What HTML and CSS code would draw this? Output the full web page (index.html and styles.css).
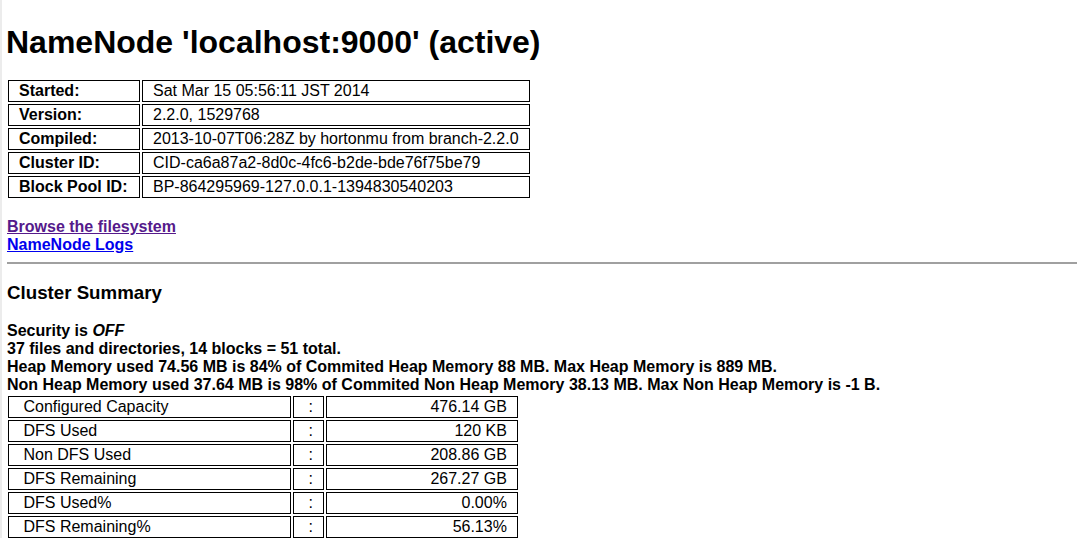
FILE: index.html
```html
<!DOCTYPE html>
<html>
<head>
<meta charset="utf-8">
<title>Hadoop NameNode localhost:9000</title>
<link rel="stylesheet" href="styles.css">
</head>
<body>
<h1 class="title">NameNode 'localhost:9000' (active)</h1>
<table class="info">
<tr><td class="col1">Started:</td><td>Sat Mar 15 05:56:11 JST 2014</td></tr>
<tr><td class="col1">Version:</td><td>2.2.0, 1529768</td></tr>
<tr><td class="col1">Compiled:</td><td>2013-10-07T06:28Z by hortonmu from branch-2.2.0</td></tr>
<tr><td class="col1">Cluster ID:</td><td>CID-ca6a87a2-8d0c-4fc6-b2de-bde76f75be79</td></tr>
<tr><td class="col1">Block Pool ID:</td><td>BP-864295969-127.0.0.1-1394830540203</td></tr>
</table>
<div class="links">
<a class="visited" href="#browse">Browse the filesystem</a><br>
<a class="fresh" href="#logs">NameNode Logs</a>
</div>
<hr class="rule">
<h3 class="section">Cluster Summary</h3>
<div class="summary">
Security is <em>OFF</em><br>
37 files and directories, 14 blocks = 51 total.<br>
Heap Memory used 74.56 MB is 84% of Commited Heap Memory 88 MB. Max Heap Memory is 889 MB.<br>
Non Heap Memory used 37.64 MB is 98% of Commited Non Heap Memory 38.13 MB. Max Non Heap Memory is -1 B.
</div>
<table class="dfs">
<tr><td class="c1"> Configured Capacity</td><td class="c2"> :</td><td class="c3">476.14 GB</td></tr>
<tr><td class="c1"> DFS Used</td><td class="c2"> :</td><td class="c3">120 KB</td></tr>
<tr><td class="c1"> Non DFS Used</td><td class="c2"> :</td><td class="c3">208.86 GB</td></tr>
<tr><td class="c1"> DFS Remaining</td><td class="c2"> :</td><td class="c3">267.27 GB</td></tr>
<tr><td class="c1"> DFS Used%</td><td class="c2"> :</td><td class="c3">0.00%</td></tr>
<tr><td class="c1"> DFS Remaining%</td><td class="c2"> :</td><td class="c3">56.13%</td></tr>
</table>
</body>
</html>
```

FILE: styles.css
```css
html {
  background: #ffffff;
}
body {
  margin: 0;
  padding: 24px 0 0 4px;
  font-family: "Liberation Sans", Arial, Helvetica, sans-serif;
  font-size: 16px;
  color: #000;
  border-left: 2px solid #ececec;
}
.title {
  font-size: 32px;
  font-weight: bold;
  margin: 0 0 17px 0;
  line-height: 37px;
}
.info {
  border-collapse: separate;
  border-spacing: 2px;
  margin-left: 0;
}
.info td {
  border: 1px solid #000;
  padding: 1px 10px;
  line-height: 18px;
  white-space: nowrap;
  box-sizing: border-box;
}
.info td.col1 {
  font-weight: bold;
  width: 132px;
}
.links {
  margin-top: 18px;
  padding-left: 1px;
  font-weight: bold;
  line-height: 18px;
}
.links a {
  text-decoration: underline;
}
.links a.visited {
  color: #551a8b;
}
.links a.fresh {
  color: #0000ee;
}
.rule {
  margin: 8px 0 0 1px;
  border: none;
  border-top: 2px solid #a0a0a0;
  height: 0;
}
.section {
  font-size: 18.72px;
  font-weight: bold;
  margin: 18px 0 0 1px;
  line-height: 22px;
}
.summary {
  margin-top: 18px;
  padding-left: 1px;
  font-weight: bold;
  line-height: 18px;
}
.dfs {
  border-collapse: separate;
  border-spacing: 2px;
}
.dfs td {
  border: 1px solid #000;
  padding: 1px 10px;
  line-height: 18px;
  white-space: pre;
  box-sizing: border-box;
}
.dfs td.c1 {
  width: 283px;
}
.dfs td.c2 {
  width: 29px;
}
.dfs td.c3 {
  width: 192px;
  text-align: right;
}
```
